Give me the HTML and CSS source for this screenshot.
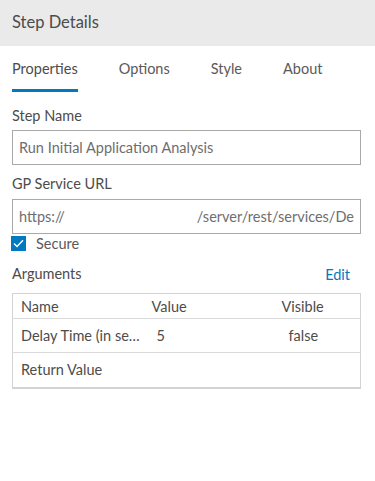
FILE: index.html
```html
<!DOCTYPE html>
<html lang="en">
<head>
  <meta charset="UTF-8">
  <meta name="viewport" content="width=device-width, initial-scale=1.0">
  <title>Step Details</title>
  <link rel="stylesheet" href="styles.css">
</head>
<body>
  <div class="panel">
    <div class="panel-header">Step Details</div>
    <nav class="tabs">
      <a href="#" class="tab active">Properties</a>
      <a href="#" class="tab">Options</a>
      <a href="#" class="tab">Style</a>
      <a href="#" class="tab">About</a>
    </nav>
    <div class="panel-body">
      <label class="field-label">Step Name</label>
      <div class="text-input">Run Initial Application Analysis</div>

      <label class="field-label">GP Service URL</label>
      <div class="text-input url-input">
        <span>https://</span>
        <span class="url-path">/server/rest/services/De</span>
      </div>

      <label class="checkbox-row">
        <span class="checkbox">
          <svg width="15" height="15" viewBox="0 0 15 15">
            <path d="M3 7.6 L6 10.4 L12 4.2" fill="none" stroke="#fff" stroke-width="1.4"/>
          </svg>
        </span>
        Secure
      </label>

      <div class="args-head">
        <span class="field-label">Arguments</span>
        <a href="#" class="edit-link">Edit</a>
      </div>

      <table class="args-table">
        <colgroup>
          <col class="col-name">
          <col class="col-value">
          <col>
        </colgroup>
        <tr class="head-row">
          <td>Name</td>
          <td>Value</td>
          <td>Visible</td>
        </tr>
        <tr>
          <td class="name-cell" title="Delay Time (in seconds)">Delay Time (in se…</td>
          <td class="val">5</td>
          <td class="vis">false</td>
        </tr>
        <tr class="last-row">
          <td>Return Value</td>
          <td></td>
          <td></td>
        </tr>
      </table>
    </div>
  </div>
</body>
</html>
```

FILE: styles.css
```css
body {
  margin: 0;
  font-family: Lato, "Open Sans", sans-serif;
  font-size: 14.5px;
  color: #4c4c4c;
  background: #fff;
}

.panel-header {
  height: 46px;
  background: #eaeaea;
  padding: 0 12px;
  line-height: 44px;
  font-size: 16.5px;
  color: #4c4c4c;
}

.tabs {
  display: flex;
  padding: 0 12px;
  height: 46px;
}

.tab {
  margin-right: 41px;
  color: #5a5a5a;
  text-decoration: none;
  font-size: 14.5px;
  line-height: 46px;
  border-bottom: 3px solid transparent;
  height: 43px;
}

.tab.active {
  border-bottom-color: #0079c1;
  color: #4c4c4c;
}

.panel-body {
  padding: 15px 14px 0 12px;
}

.field-label {
  display: block;
  color: #4c4c4c;
  line-height: 18px;
}

.text-input {
  margin: 5px 0 10px;
  height: 33px;
  border: 1px solid #a9a9a9;
  padding: 0 6px;
  line-height: 33px;
  color: #6e6e6e;
  white-space: nowrap;
  overflow: hidden;
}

.url-input {
  display: flex;
  justify-content: space-between;
  margin-top: 6px;
  margin-bottom: 2px;
}

.checkbox-row {
  display: flex;
  align-items: center;
  gap: 10px;
  margin-left: -1px;
  color: #5a5a5a;
  line-height: 15px;
}

.checkbox {
  display: block;
  width: 15px;
  height: 15px;
  background: #0079c1;
}

.args-head {
  display: flex;
  justify-content: space-between;
  align-items: center;
  margin-top: 13px;
  padding-right: 11px;
}

.edit-link {
  color: #0079c1;
  text-decoration: none;
  margin-top: 2px;
}

.args-table {
  width: 100%;
  margin-top: 10px;
  border-collapse: collapse;
  border: 1px solid #d3d3d3;
  border-bottom-width: 2px;
  table-layout: fixed;
  color: #4c4c4c;
}

.col-name { width: 131px; }
.col-value { width: 130px; }

.args-table td {
  box-sizing: border-box;
  padding: 0 8px;
  height: 25px;
  border-bottom: 1px solid #d9d9d9;
  white-space: nowrap;
  overflow: hidden;
}

.args-table tr + tr td {
  height: 34px;
}

.args-table .last-row td {
  height: 35px;
  border-bottom: none;
}

.args-table .name-cell { padding-right: 2px; }
.args-table .val { padding-left: 13px; }
.args-table .vis { padding-left: 15px; }
```
